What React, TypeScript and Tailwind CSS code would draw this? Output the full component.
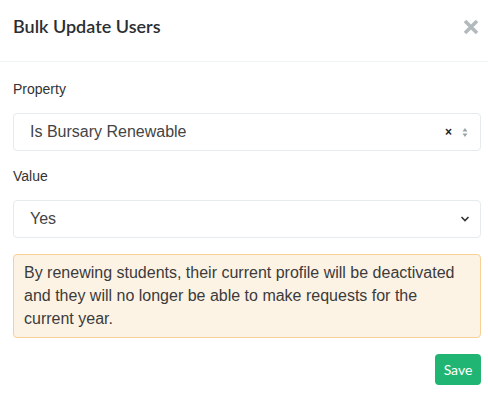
import React from 'react';

const App: React.FC = () => {
  return (
    <div className="w-[488px] h-[400px] bg-white text-[#333]" style={{ fontFamily: '"Liberation Sans", Arial, sans-serif' }}>
      <div className="flex items-center justify-between h-[62px] pl-[13px] pr-[7px] border-b border-[#eef3f3]">
        <h4 className="text-[18px] font-semibold text-[#2b2f33] mt-[-8px]" style={{ fontFamily: 'Lato, sans-serif' }}>
          Bulk Update Users
        </h4>
        <button className="mt-[-8px] mr-[1px] text-[#b3babd]">
          <svg width="18" height="18" viewBox="0 0 18 18">
            <path d="M3 3 L15 15 M15 3 L3 15" stroke="currentColor" strokeWidth="3.6" strokeLinecap="butt" />
          </svg>
        </button>
      </div>
      <div className="pl-[13px] pr-[7px] pt-[17px]">
        <label className="block text-[14px] text-[#333] leading-[20px]">Property</label>
        <div className="mt-[14px] h-[38px] flex items-center justify-between border border-[#e6ebed] rounded-[4px] pl-[16px] pr-[12px]">
          <span className="text-[16px] text-[#444]">Is Bursary Renewable</span>
          <div className="flex items-center gap-[10px]">
            <span className="text-[12px] font-bold text-[#222] leading-none">×</span>
            <svg width="6" height="11" viewBox="0 0 6 11">
              <path d="M3 1 L5.5 4.5 H0.5 Z M3 10 L5.5 6.5 H0.5 Z" fill="#9aa3a8" />
            </svg>
          </div>
        </div>
        <label className="block mt-[15px] text-[14px] text-[#333] leading-[20px]">Value</label>
        <div className="mt-[14px] h-[38px] flex items-center justify-between border border-[#e6ebed] rounded-[4px] pl-[16px] pr-[10px]">
          <span className="text-[16px] text-[#444]">Yes</span>
          <svg width="10" height="8" viewBox="0 0 10 8">
            <path d="M1.5 2 L5 5.5 L8.5 2" stroke="#333" strokeWidth="1.6" fill="none" />
          </svg>
        </div>
        <div className="mt-[16px] border border-[#f8cf95] bg-[#fdf3e5] rounded-[4px] px-[10px] pt-[6px] pb-[7px] text-[16px] leading-[23px] text-[#3b3b3b]">
          By renewing students, their current profile will be deactivated and they will no longer be able to make requests for the current year.
        </div>
        <div className="flex justify-end mt-[16px]">
          <button className="h-[31px] w-[46px] rounded-[4px] bg-[#21b573] text-white text-[14px]" style={{ fontFamily: 'Lato, sans-serif' }}>
            Save
          </button>
        </div>
      </div>
    </div>
  );
};

export default App;
